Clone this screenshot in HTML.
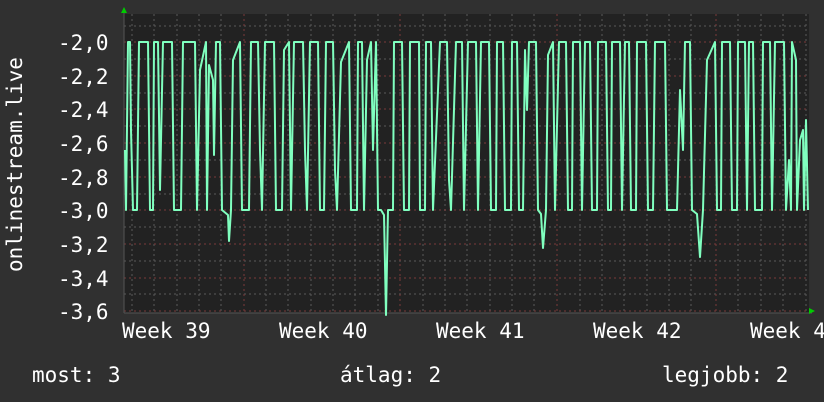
<!DOCTYPE html>
<html><head><meta charset="utf-8"><style>
html,body{margin:0;padding:0;background:#303030;}
body{width:824px;height:402px;overflow:hidden;position:relative;font-family:"DejaVu Sans Mono","Liberation Mono",monospace;color:#fff;}
.t{position:absolute;font-size:21px;line-height:21px;white-space:pre;}
</style></head><body>
<svg width="824" height="402" style="position:absolute;left:0;top:0">
<rect x="124" y="14" width="685" height="299" fill="#222"/>
<g stroke="#5a5a5a" stroke-width="1" stroke-dasharray="2,3">
<path d="M132,14V313M154,14V313M177,14V313M199,14V313M221,14V313M266,14V313M288,14V313M311,14V313M333,14V313M355,14V313M378,14V313M423,14V313M445,14V313M467,14V313M490,14V313M512,14V313M534,14V313M580,14V313M602,14V313M624,14V313M647,14V313M669,14V313M691,14V313M738,14V313M761,14V313M783,14V313M806,14V313"/>
<path d="M124,26H809M124,59H809M124,93H809M124,126H809M124,160H809M124,194H809M124,227H809M124,261H809M124,294H809"/>
</g>
<g stroke="#7a3a3a" stroke-width="1" stroke-dasharray="2,3">
<path d="M244,14V313M400,14V313M557,14V313M716,14V313"/>
<path d="M124,42H809M124,76H809M124,109H809M124,143H809M124,177H809M124,210H809M124,244H809M124,278H809M124,311H809"/>
</g>
<path d="M124,313H812M124,313V8" stroke="#555" stroke-width="1"/>
<path d="M121,13L124,7L127,13Z" fill="#0c0"/>
<path d="M809,308L815,311L809,314Z" fill="#0c0"/>
<path fill="none" stroke="#80ffbf" stroke-width="2" stroke-linejoin="round" d="M125,150L126,210L128,42L130,42L131,130L133,210L137,210L139,42L148,42L150,210L153,210L154,42L158,42L160,190L163,42L172,42L174,210L181,210L183,42L195,42L197,210L200,70L206,42L207,210L209,65L213,80L214,155L216,42L220,42L222,210L228,215L229,241L231,210L233,60L240,42L242,210L249,210L251,42L258,42L260,150L262,210L265,42L274,42L276,210L282,210L284,50L289,42L291,210L294,42L303,42L305,150L307,210L310,42L318,42L320,210L324,210L326,42L333,42L335,170L337,210L341,62L349,42L351,210L357,210L358,42L362,42L364,210L367,60L371,42L373,150L376,42L378,210L381,210L384,215L386,315L388,210L393,210L394,42L402,42L404,210L409,210L410,42L419,42L420,210L425,210L426,42L431,42L433,210L440,42L447,42L449,180L451,210L456,42L462,42L464,210L468,42L476,42L478,210L481,42L489,42L491,210L496,210L497,42L503,42L505,210L511,210L512,42L517,42L519,210L523,210L525,50L527,110L529,42L536,42L538,210L541,214L543,248L546,210L548,55L553,42L555,210L559,42L566,42L568,210L572,210L573,42L580,42L582,210L585,42L590,42L592,210L597,210L598,42L606,42L608,210L611,210L612,42L620,42L622,210L625,42L629,42L631,210L636,210L637,42L646,42L648,210L653,210L655,42L665,42L667,210L677,210L680,90L683,150L685,42L690,42L692,210L697,214L700,257L703,210L707,60L715,42L717,210L721,210L722,42L730,42L732,210L737,210L738,42L745,42L747,210L749,42L753,42L755,210L762,210L763,42L770,42L772,210L775,42L784,42L786,210L789,160L791,210L792,42L796,60L797,210L800,140L803,130L804,210L806,120L808,210"/>
<text x="22" y="272" transform="rotate(-90 22 272)" font-family="DejaVu Sans Mono,Liberation Mono,monospace" font-size="21" fill="#fff">onlinestream.live</text>
</svg>
<div class="t" style="left:58px;top:33px">-2,0</div>
<div class="t" style="left:58px;top:67px">-2,2</div>
<div class="t" style="left:58px;top:100px">-2,4</div>
<div class="t" style="left:58px;top:134px">-2,6</div>
<div class="t" style="left:58px;top:168px">-2,8</div>
<div class="t" style="left:58px;top:201px">-3,0</div>
<div class="t" style="left:58px;top:235px">-3,2</div>
<div class="t" style="left:58px;top:269px">-3,4</div>
<div class="t" style="left:58px;top:302px">-3,6</div>
<div class="t" style="left:122px;top:321px">Week 39</div>
<div class="t" style="left:279px;top:321px">Week 40</div>
<div class="t" style="left:436px;top:321px">Week 41</div>
<div class="t" style="left:593px;top:321px">Week 42</div>
<div class="t" style="left:750px;top:321px">Week 43</div>
<div class="t" style="left:32px;top:365px">most: 3</div>
<div class="t" style="left:340px;top:365px">átlag: 2</div>
<div class="t" style="left:662px;top:365px">legjobb: 2</div>
</body></html>
